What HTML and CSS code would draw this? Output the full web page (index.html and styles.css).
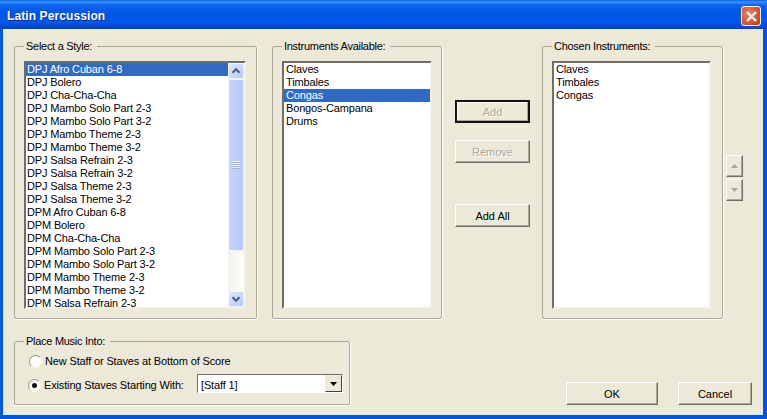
FILE: index.html
```html
<!DOCTYPE html>
<html lang="en">
<head>
<meta charset="utf-8">
<title>Latin Percussion</title>
<link rel="stylesheet" href="styles.css">
</head>
<body>
<div class="window">
  <header class="titlebar">
    <h1 class="title">Latin Percussion</h1>
    <div class="close"><svg viewBox="0 0 13 13" width="13" height="13"><path d="M2 2 L11 11 M11 2 L2 11" stroke="#fff" stroke-width="2.4" fill="none"/></svg></div>
  </header>
  <main class="client">
    <div class="top">
      <fieldset class="group group-style">
        <legend>Select a Style:</legend>
        <div class="list list-style">
          <ul class="items">
            <li class="sel">DPJ Afro Cuban 6-8</li>
            <li>DPJ Bolero</li>
            <li>DPJ Cha-Cha-Cha</li>
            <li>DPJ Mambo Solo Part 2-3</li>
            <li>DPJ Mambo Solo Part 3-2</li>
            <li>DPJ Mambo Theme 2-3</li>
            <li>DPJ Mambo Theme 3-2</li>
            <li>DPJ Salsa Refrain 2-3</li>
            <li>DPJ Salsa Refrain 3-2</li>
            <li>DPJ Salsa Theme 2-3</li>
            <li>DPJ Salsa Theme 3-2</li>
            <li>DPM Afro Cuban 6-8</li>
            <li>DPM Bolero</li>
            <li>DPM Cha-Cha-Cha</li>
            <li>DPM Mambo Solo Part 2-3</li>
            <li>DPM Mambo Solo Part 3-2</li>
            <li>DPM Mambo Theme 2-3</li>
            <li>DPM Mambo Theme 3-2</li>
            <li>DPM Salsa Refrain 2-3</li>
          </ul>
          <div class="scrollbar">
            <div class="sb-btn"><svg viewBox="0 0 16 16" width="16" height="16"><path d="M4 10 L8 6 L12 10" stroke="#4d6185" stroke-width="2.4" fill="none"/></svg></div>
            <div class="sb-thumb"><div class="grip"></div></div>
            <div class="sb-track"></div>
            <div class="sb-btn"><svg viewBox="0 0 16 16" width="16" height="16"><path d="M4 6 L8 10 L12 6" stroke="#4d6185" stroke-width="2.4" fill="none"/></svg></div>
          </div>
        </div>
      </fieldset>
      <fieldset class="group group-avail">
        <legend>Instruments Available:</legend>
        <div class="list">
          <ul class="items">
            <li>Claves</li>
            <li>Timbales</li>
            <li class="sel">Congas</li>
            <li>Bongos-Campana</li>
            <li>Drums</li>
          </ul>
        </div>
      </fieldset>
      <div class="actions">
        <button class="btn btn-default" disabled>Add</button>
        <button class="btn btn-remove" disabled>Remove</button>
        <button class="btn btn-addall">Add All</button>
      </div>
      <fieldset class="group group-chosen">
        <legend>Chosen Instruments:</legend>
        <div class="list">
          <ul class="items">
            <li>Claves</li>
            <li>Timbales</li>
            <li>Congas</li>
          </ul>
        </div>
      </fieldset>
      <div class="updown">
        <div class="btn mini"><svg viewBox="0 0 7 4" width="7" height="4"><path d="M0 4 L3.500 0 L7 4 Z" fill="#aca899"/></svg></div>
        <div class="btn mini"><svg viewBox="0 0 7 4" width="7" height="4"><path d="M0 0 L3.500 4 L7 0 Z" fill="#aca899"/></svg></div>
      </div>
    </div>
    <div class="bottom">
      <fieldset class="group group-place">
        <legend>Place Music Into:</legend>
        <div class="opt opt-new">
          <span class="radio"></span><span>New Staff or Staves at Bottom of Score</span>
        </div>
        <div class="opt opt-existing">
          <span class="radio radio-on"></span><span class="opt-label">Existing Staves Starting With:</span>
          <div class="combo"><span class="combo-text">[Staff 1]</span><span class="combo-btn"><svg viewBox="0 0 7 4" width="7" height="4"><path d="M0 0 H7 L3.500 4 Z" fill="#000"/></svg></span></div>
        </div>
      </fieldset>
      <div class="dialog-btns">
        <button class="btn btn-ok">OK</button>
        <button class="btn btn-cancel">Cancel</button>
      </div>
    </div>
  </main>
</div>
</body>
</html>
```

FILE: styles.css
```css
* { box-sizing: border-box; }
html, body { margin: 0; height: 100%; overflow: hidden; }
body { font: 11px/13px "Liberation Sans", Arial, sans-serif; letter-spacing: -.15px; color: #000; background: #0831d9; }
.window { width: 767px; height: 419px; display: flex; flex-direction: column; background: #0054e3; padding: 0 4px 4px 3px; }
.titlebar {
  height: 29px; margin: 0 -4px 0 -3px; padding: 3px 6px 0 7px; display: flex; align-items: center; justify-content: space-between;
  background: linear-gradient(#0a5fe0 0, #3a93ff 2px, #0a63ee 5px, #0055e5 14px, #0058ea 22px, #0049d0 27px, #0040b8 29px);
}
.title { margin: 0; font: bold 12px "Liberation Sans", Arial, sans-serif; letter-spacing: .1px; color: #fff; text-shadow: 1px 1px 0 #0a2a90; }
.close {
  width: 20px; height: 20px; border: 1px solid #fff; border-radius: 3px; display: flex; align-items: center; justify-content: center;
  background: radial-gradient(circle at 35% 35%, #ee8060, #d84a24 70%, #c0391a);
}
.client { flex: 1; background: #ece9d8; padding: 11px 0 0 11px; display: flex; flex-direction: column; }
.top { display: flex; height: 279px; }
.group { margin: 0; padding: 0; border: 1px solid #aca899; border-radius: 2px; box-shadow: 0 1px 0 #fff, 1px 0 0 #fff; min-width: 0; }
.group legend { margin-left: 0; padding: 0 5px 0 2px; height: 13px; letter-spacing: -.28px; }
.group-style { width: 243px; height: 279px; padding: 8px 10px 0 9px; }
.group-avail { width: 170px; height: 279px; margin-left: 15px; padding: 8px 9px 0 9px; }
.group-chosen { width: 181px; height: 279px; padding: 8px 11px 0 9px; }
.list { display: flex; background: #fff; height: 248px; border: 2px solid; border-color: #716f64 #f1efe2 #f1efe2 #716f64; }
.items { flex: 1; min-width: 0; list-style: none; margin: 0; padding: 0; overflow: hidden; }
.items li { height: 13px; padding-left: 2px; white-space: nowrap; }
.list-style .items li { padding-left: 1px; }
.items .sel { background: #316ac5; color: #fff; }
.scrollbar { width: 16px; display: flex; flex-direction: column; background: linear-gradient(90deg, #f3f1ec, #fdfdfa); }
.sb-btn { height: 16px; width: 16px; background: linear-gradient(135deg, #dfe9fd, #b5c9f7); border: 1px solid #eef3fe; border-radius: 2px; display: flex; align-items: center; justify-content: center; }
.sb-thumb { height: 172px; background: linear-gradient(90deg, #c6d5fb, #b6c9f8); border: 1px solid #eef3fe; border-radius: 2px; display: flex; align-items: center; justify-content: center; }
.grip { width: 8px; height: 8px; background: repeating-linear-gradient(#eef3fe 0 1px, #9fb6ec 1px 2px); }
.sb-track { flex: 1; }
.actions { width: 89px; padding: 60px 0 0 13px; display: flex; flex-direction: column; flex: none; margin-right: 11px; }
.btn { width: 75px; height: 23px; padding: 0; font: 11px "Liberation Sans", Arial, sans-serif; color: #000; background: #ece9d8; border: 1px solid; border-color: #fff #716f64 #716f64 #fff; box-shadow: inset -1px -1px 0 #aca899; flex: none; }
.btn:disabled { color: #aca899; text-shadow: 1px 1px 0 #fff; }
.btn-remove { margin-top: 17px; }
.btn-addall { margin-top: 41px; }
.btn-default { border: 2px solid #111; box-shadow: inset -1px -1px 0 #aca899, inset 1px 1px 0 #fff; }
.updown { margin-left: 3px; padding-top: 115px; display: flex; flex-direction: column; gap: 2px; }
.mini { width: 17px; height: 22px; display: flex; align-items: center; justify-content: center; }
.bottom { display: flex; margin-top: 16px; align-items: flex-end; }
.group-place { width: 336px; height: 70px; padding: 5px 0 0 14px; }
.group-place legend { margin-left: -5px; }
.opt { display: flex; align-items: center; }
.opt-new { height: 16px; }
.opt-existing { height: 22px; margin: 5px 0 0 -1px; }
.radio { width: 13px; height: 13px; margin-right: 3px; border-radius: 50%; background: #fbfbf8; border: 1px solid; border-color: #9a9888 #f4f3ea #f4f3ea #9a9888; flex: none; display: flex; align-items: center; justify-content: center; }
.radio-on::after { content: ""; width: 5px; height: 5px; border-radius: 50%; background: #111; }
.opt-label { width: 153px; flex: none; white-space: nowrap; }
.combo { width: 146px; height: 19px; margin-bottom: 3px; display: flex; background: #fff; border: 1px solid; border-color: #716f64 #fff #fff #716f64; }
.combo-text { flex: 1; padding: 4px 0 0 3px; }
.combo-btn { width: 17px; background: #ece9d8; border: 1px solid; border-color: #f1efe2 #404040 #404040 #f1efe2; display: flex; align-items: center; justify-content: center; }
.dialog-btns { display: flex; margin-left: 216px; gap: 20px; }
.btn-ok { width: 92px; }
.btn-cancel { width: 74px; }
```
